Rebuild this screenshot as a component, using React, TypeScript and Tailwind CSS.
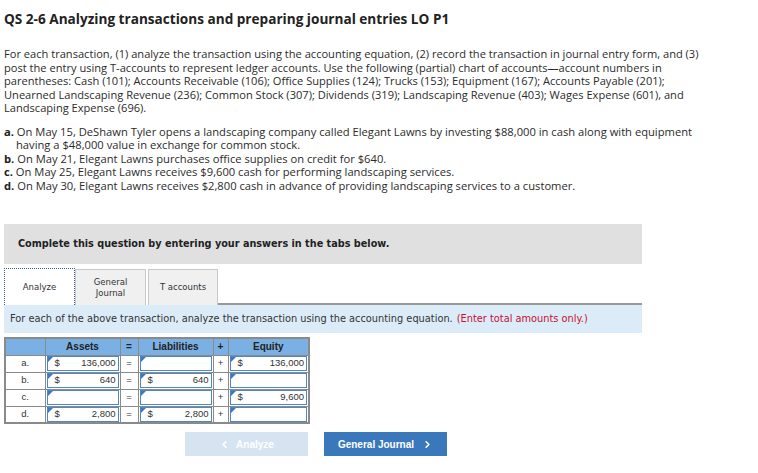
import React from 'react';
import { ChevronLeft, ChevronRight } from 'lucide-react';

const rows = [
  { label: 'a.', assets: '136,000', liab: '', equity: '136,000', aS: true, lS: false, eS: true },
  { label: 'b.', assets: '640', liab: '640', equity: '', aS: true, lS: true, eS: false },
  { label: 'c.', assets: '', liab: '', equity: '9,600', aS: false, lS: false, eS: true },
  { label: 'd.', assets: '2,800', liab: '2,800', equity: '', aS: true, lS: true, eS: false },
];

const Cell: React.FC<{ value: string; dollar: boolean }> = ({ value, dollar }) => (
  <td className="border border-[#8a8a8a] p-0 h-[17px]">
    <div className="relative mx-[1px] h-[15px] border border-[#4f86c6] bg-white flex items-center px-[2px]">
      <span className="absolute left-0 top-0 w-0 h-0 border-t-[5px] border-r-[5px] border-t-[#3a78c8] border-r-transparent" />
      {dollar && <span className="ml-[5px]">$</span>}
      <span className="ml-auto">{value}</span>
    </div>
  </td>
);

const App: React.FC = () => {
  return (
    <div className="w-[758px] h-[473px] bg-white text-[#2b2b2b] overflow-hidden font-['Open_Sans','Lato',sans-serif]">
      <h1 className="pl-[4px] pt-[10px] text-[13.6px] font-bold text-[#222] leading-[18px]">
        QS 2-6 Analyzing transactions and preparing journal entries LO P1
      </h1>

      <p className="pl-[4px] mt-[19px] text-[11.1px] leading-[13.5px]">
        For each transaction, (1) analyze the transaction using the accounting equation, (2) record the transaction in journal entry form, and (3)<br />
        post the entry using T-accounts to represent ledger accounts. Use the following (partial) chart of accounts—account numbers in<br />
        parentheses: Cash (101); Accounts Receivable (106); Office Supplies (124); Trucks (153); Equipment (167); Accounts Payable (201);<br />
        Unearned Landscaping Revenue (236); Common Stock (307); Dividends (319); Landscaping Revenue (403); Wages Expense (601), and<br />
        Landscaping Expense (696).
      </p>

      <div className="pl-[4px] mt-[10px] text-[11.2px] leading-[13.5px]">
        <div><b className="text-[#222]">a.</b> On May 15, DeShawn Tyler opens a landscaping company called Elegant Lawns by investing $88,000 in cash along with equipment</div>
        <div className="pl-[12px]">having a $48,000 value in exchange for common stock.</div>
        <div><b className="text-[#222]">b.</b> On May 21, Elegant Lawns purchases office supplies on credit for $640.</div>
        <div><b className="text-[#222]">c.</b> On May 25, Elegant Lawns receives $9,600 cash for performing landscaping services.</div>
        <div><b className="text-[#222]">d.</b> On May 30, Elegant Lawns receives $2,800 cash in advance of providing landscaping services to a customer.</div>
      </div>

      <div className="ml-[4px] mt-[32px] w-[638px] h-[40px] bg-[#e0e0e0] flex items-center pl-[14px] font-['DejaVu_Sans',sans-serif] text-[9.7px] font-bold text-[#222]">
        Complete this question by entering your answers in the tabs below.
      </div>

      <div className="ml-[4px] mt-[4px] w-[638px] font-['DejaVu_Sans',sans-serif] text-[#333]">
        <div className="flex items-end h-[37px]">
          <div className="w-[71px] h-[37px] bg-white border border-dotted border-[#3a5a9a] border-b-0 flex items-center justify-center text-[8.5px]">
            Analyze
          </div>
          <div className="w-[71px] h-[36px] bg-[#f0f0f0] border border-[#c8c8c8] border-b-0 flex items-center justify-center text-center text-[8.5px] leading-[11px]">
            General<br />Journal
          </div>
          <div className="ml-[2px] w-[70px] h-[36px] bg-[#f0f0f0] border border-[#c8c8c8] border-b-0 flex items-center justify-center text-[8.5px]">
            T accounts
          </div>
          <div className="flex-1 border-b-2 border-[#999]" />
        </div>
        <div className="h-[28px] bg-[#dbecf8] flex items-center pl-[6px] text-[9.8px]">
          <span>For each of the above transaction, analyze the transaction using the accounting equation.</span>
          <span className="ml-[4px] text-[#c8102e]">(Enter total amounts only.)</span>
        </div>
      </div>

      <table className="ml-[4px] mt-[4px] border-collapse border-2 border-[#8a8a8a] font-['Liberation_Sans',Arial,sans-serif] text-[9.5px] text-[#333]">
        <colgroup>
          <col className="w-[40px]" />
          <col className="w-[75px]" />
          <col className="w-[18px]" />
          <col className="w-[75px]" />
          <col className="w-[15px]" />
          <col className="w-[81px]" />
        </colgroup>
        <thead>
          <tr className="bg-[#7bb0e4] h-[17px] text-[#222]">
            <th className="border border-[#8a8a8a] font-normal" />
            <th className="border border-[#8a8a8a] font-bold text-[10px]">Assets</th>
            <th className="border border-[#8a8a8a] font-bold text-[10px]">=</th>
            <th className="border border-[#8a8a8a] font-bold text-[10px]">Liabilities</th>
            <th className="border border-[#8a8a8a] font-bold text-[10px]">+</th>
            <th className="border border-[#8a8a8a] font-bold text-[10px]">Equity</th>
          </tr>
        </thead>
        <tbody>
          {rows.map((r) => (
            <tr key={r.label}>
              <td className="border border-[#8a8a8a] text-center h-[17px]">{r.label}</td>
              <Cell value={r.assets} dollar={r.aS} />
              <td className="border border-[#8a8a8a] text-center">=</td>
              <Cell value={r.liab} dollar={r.lS} />
              <td className="border border-[#8a8a8a] text-center">+</td>
              <Cell value={r.equity} dollar={r.eS} />
            </tr>
          ))}
        </tbody>
      </table>

      <div className="flex gap-[16px] ml-[185px] mt-[8px] font-['Liberation_Sans',Arial,sans-serif] text-[10px] font-bold">
        <div className="w-[123px] h-[24px] bg-[#d6e4f2] text-white flex items-center justify-center gap-[6px]">
          <ChevronLeft className="w-[11px] h-[11px]" strokeWidth={3.5} />
          <span>Analyze</span>
        </div>
        <div className="w-[123px] h-[24px] bg-[#3a78bc] text-white flex items-center justify-center gap-[8px]">
          <span>General Journal</span>
          <ChevronRight className="w-[11px] h-[11px]" strokeWidth={3.5} />
        </div>
      </div>
    </div>
  );
};

export default App;
